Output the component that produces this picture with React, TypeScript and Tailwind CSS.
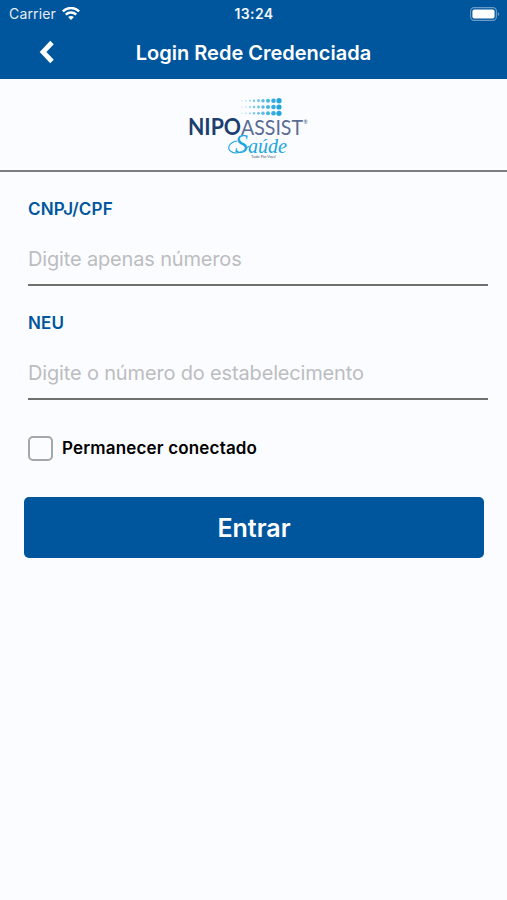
import { useState } from "react";

const dotColumns = [
  { x: 53, r: 0.5 },
  { x: 57, r: 0.7 },
  { x: 61, r: 0.9 },
  { x: 65, r: 1.2 },
  { x: 69.5, r: 1.4 },
  { x: 74, r: 1.7 },
  { x: 79, r: 2 },
  { x: 84.5, r: 2.3 },
  { x: 90, r: 2.6 },
];

const dotRows = [10.7, 17, 23.3];

function StatusBar() {
  return (
    <div className="grid h-[27px] grid-cols-3 items-center pt-px pr-[7px] pl-[9px] text-white">
      <div className="flex items-center gap-[6px]">
        <span className="text-[14px] leading-none tracking-[0.15px] opacity-90">Carrier</span>
        <svg width="18" height="14" viewBox="0 0 18 14" fill="none" stroke="currentColor" strokeWidth="2.5">
          <path d="M0.8 4.4C5.4 -0.1 12.6 -0.1 17.2 4.4" />
          <path d="M3.8 7.6C6.7 4.8 11.3 4.8 14.2 7.6" />
          <path d="M6.1 10.1C7.7 8.5 10.3 8.5 11.9 10.1L9 13.1Z" fill="currentColor" stroke="none" />
        </svg>
      </div>
      <span className="pr-px text-center text-[14px] leading-none font-semibold tracking-[0.4px] opacity-95">
        13:24
      </span>
      <svg className="justify-self-end" width="30" height="14" viewBox="0 0 30 14" fill="none">
        <rect x="0.6" y="0.6" width="25.8" height="12.8" rx="3.6" stroke="#6b9cc8" strokeWidth="1.1" />
        <rect x="2.4" y="2.4" width="22.2" height="9.2" rx="2" fill="white" />
        <path d="M27.8 5C29.7 5.6 29.7 8.4 27.8 9Z" fill="#6b9cc8" />
      </svg>
    </div>
  );
}

function Logo() {
  return (
    <svg className="mr-[5px]" width="124" height="78" viewBox="0 0 124 78">
      {dotRows.map((y) =>
        dotColumns.map(({ x, r }) => (
          <circle key={`${x}-${y}`} cx={x} cy={y} r={r} fill="#20a5d8" opacity={0.3 + r / 3.8} />
        ))
      )}
      <g fontFamily="Lato, sans-serif" fontSize="22">
        <text x="-1" y="45" fontWeight="700" fill="#1b3f70" textLength="53" lengthAdjust="spacingAndGlyphs">
          NIPO
        </text>
        <text x="52" y="45" fontWeight="400" fill="#5a6c94" textLength="62" lengthAdjust="spacingAndGlyphs">
          ASSIST
        </text>
        <text x="114.5" y="34" fontSize="5" fill="#344c7e">®</text>
      </g>
      {/* swash that runs out of the S */}
      <path d="M48 51C41 52 37 58 42 61.5C47 65 55 62 60 56" fill="none" stroke="#20a5e0" strokeWidth="1.1" />
      <text
        x="46"
        y="62.5"
        fontFamily="'Liberation Serif', serif"
        fontStyle="italic"
        fontSize="21"
        fill="#20a5e0"
        textLength="52"
        lengthAdjust="spacingAndGlyphs"
      >
        <tspan fontSize="27">S</tspan>aúde
      </text>
      <text x="62" y="67.5" fontFamily="Lato, sans-serif" fontSize="4" fill="#55606e" textLength="25">
        Tudo Por Você
      </text>
    </svg>
  );
}

function Field({ label, placeholder }: { label: string; placeholder: string }) {
  return (
    <label className="block h-[114px] pt-[8px]">
      <span className="block text-[17px] leading-[22px] font-semibold tracking-[0.15px] text-[#00569d]">{label}</span>
      <input
        type="text"
        placeholder={placeholder}
        className="mt-[17px] block h-[49px] w-full border-b-2 border-[#70716f] bg-transparent pb-[3px] text-[20px] tracking-[-0.16px] outline-none placeholder:text-[#bcbdc0]"
      />
    </label>
  );
}

export default function App() {
  const [stayConnected, setStayConnected] = useState(false);

  return (
    <div className="min-h-screen bg-[#fbfcff] font-['Inter',sans-serif]">
      <header className="h-[79px] bg-[#00569d] text-white">
        <StatusBar />
        <div className="grid h-[50px] grid-cols-[94px_1fr_94px] items-center">
          <button type="button" aria-label="Voltar" className="pl-[39px]">
            <svg width="16" height="24" viewBox="0 0 16 24" fill="none" stroke="currentColor" strokeWidth="4.8">
              <path d="M13 2.5L4 12L13 21.5" />
            </svg>
          </button>
          <h1 className="pt-px text-center text-[20px] font-semibold whitespace-nowrap">Login Rede Credenciada</h1>
        </div>
      </header>

      <div className="flex h-[93px] justify-center border-b-2 border-[#7d7e80] pt-[11px]">
        <Logo />
      </div>

      <main>
        <div className="pt-[18px] pr-[19px] pl-[28px]">
          <Field label="CNPJ/CPF" placeholder="Digite apenas números" />
          <Field label="NEU" placeholder="Digite o número do estabelecimento" />
        </div>

        <label className="mt-[17px] ml-[28px] flex h-[26px] items-center gap-[9px]">
          <input
            type="checkbox"
            checked={stayConnected}
            onChange={(e) => setStayConnected(e.target.checked)}
            className="size-[25px] appearance-none rounded-[5px] border-2 border-[#a5a6a8] checked:bg-[#00569d]"
          />
          <span className="pt-px text-[17px] font-semibold tracking-[0.17px] text-black">Permanecer conectado</span>
        </label>

        <div className="pt-[36px] pr-[23px] pl-[24px]">
          <button type="button" className="h-[61px] w-full rounded-[5px] bg-[#00569d] pt-[2px] text-[25px] font-semibold text-white">
            Entrar
          </button>
        </div>
      </main>
    </div>
  );
}
